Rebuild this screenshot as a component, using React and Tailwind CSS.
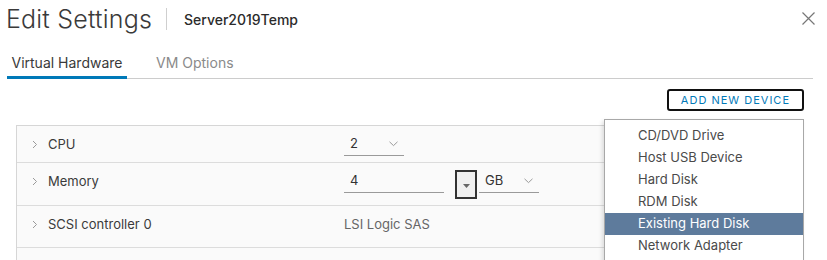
import React from 'react'

const font = { fontFamily: 'Inter, "Noto Sans", Arial, sans-serif' }

function RowChevron() {
  return (
    <svg width="6" height="9" viewBox="0 0 6 9" className="shrink-0">
      <path d="M1 1 L4.5 4.5 L1 8" fill="none" stroke="#9a9a9a" strokeWidth="1" />
    </svg>
  )
}

function DownChevron() {
  return (
    <svg width="9" height="6" viewBox="0 0 9 6">
      <path d="M0.5 0.8 L4.5 4.6 L8.5 0.8" fill="none" stroke="#9a9a9a" strokeWidth="1" />
    </svg>
  )
}

function Row({ label, height, children }) {
  return (
    <div className={`flex items-start border-b border-[#dcdcdc] ${height}`}>
      <div className="flex items-center w-[327px] pl-[15px] pt-[9px] gap-[10px] text-[13px] text-[#3a3a3a]">
        <RowChevron />
        <span>{label}</span>
      </div>
      <div className="flex items-center pt-[6px]">{children}</div>
    </div>
  )
}

const items = ['CD/DVD Drive', 'Host USB Device', 'Hard Disk', 'RDM Disk', 'Existing Hard Disk', 'Network Adapter']

export default function App() {
  return (
    <div style={font} className="relative w-[827px] h-[260px] overflow-hidden bg-white">
      {/* header */}
      <div className="flex items-center h-[38px] pl-[6px] pr-[12px]">
        <span className="text-[25px] font-light text-[#3a3a3a] leading-[30px] tracking-[0.2px]">Edit Settings</span>
        <div className="w-px h-[22px] bg-[#cfcfcf] ml-[14px] mr-[17px]"></div>
        <span className="text-[14px] font-medium text-[#2b2b2b]">Server2019Temp</span>
        <svg width="13" height="13" viewBox="0 0 13 13" className="ml-auto mt-[-1px]">
          <path d="M0.5 0.5 L12.5 12.5 M12.5 0.5 L0.5 12.5" stroke="#777" strokeWidth="1.2" />
        </svg>
      </div>

      {/* tabs */}
      <div className="flex items-end ml-[7px] mr-[14px] mt-[11px] border-b border-[#cccccc] h-[30px] text-[14px]">
        <div className="w-[120px] text-center text-[#3a3a3a] border-b-[3px] border-[#0079b8] pb-[3px] mb-[-1px]">Virtual Hardware</div>
        <div className="ml-[29px] text-[#8a8a8a] pb-[5px]">VM Options</div>
      </div>

      {/* toolbar */}
      <div className="flex justify-end pr-[23px] mt-[10px]">
        <button className="h-[22px] px-[12px] border-2 border-[#111] rounded-[3px] text-[11px] font-normal tracking-[1px] text-[#0079b8] leading-none">
          ADD NEW DEVICE
        </button>
      </div>

      {/* device list */}
      <div className="ml-[16px] mr-[23px] mt-[14px] border-l border-t border-[#d6d6d6] bg-[#fafafa]">
        <Row label="CPU" height="h-[37px]">
          <div className="flex items-center justify-between w-[60px] h-[24px] border-b border-[#9a9a9a] pl-[6px] pr-[6px] text-[13px] text-[#333]">
            <span>2</span>
            <DownChevron />
          </div>
        </Row>
        <Row label="Memory" height="h-[43px]">
          <div className="flex items-end">
            <div className="flex items-center w-[100px] h-[24px] border-b border-[#9a9a9a] pl-[6px] text-[13px] text-[#333] mb-[6px]">4</div>
            <div className="flex items-center justify-center w-[22px] h-[29px] ml-[11px] border-2 border-[#333] bg-[#f0f0f0]">
              <svg width="7" height="4" viewBox="0 0 7 4" className="mt-[3px]">
                <path d="M0 0 L7 0 L3.5 4 Z" fill="#666" />
              </svg>
            </div>
            <div className="flex items-center justify-between w-[60px] h-[24px] border-b border-[#9a9a9a] ml-[2px] pl-[6px] pr-[6px] text-[13px] text-[#333] mb-[6px]">
              <span>GB</span>
              <DownChevron />
            </div>
          </div>
        </Row>
        <Row label="SCSI controller 0" height="h-[42px]">
          <span className="text-[13px] text-[#666] leading-[24px]">LSI Logic SAS</span>
        </Row>
        <div className="h-[20px]"></div>
      </div>

      {/* add device menu */}
      <div className="absolute left-[604px] top-[119px] w-[200px] h-[160px] bg-white border border-[#a8a8a8] shadow-[-2px_2px_4px_rgba(0,0,0,0.12)] pt-[5px]">
        {items.map((it) => (
          <div
            key={it}
            className={`h-[22px] flex items-center pl-[33px] text-[13px] ${
              it === 'Existing Hard Disk' ? 'bg-[#5e7b9c] text-white' : 'text-[#4a4a4a]'
            }`}
          >
            {it}
          </div>
        ))}
      </div>
    </div>
  )
}
